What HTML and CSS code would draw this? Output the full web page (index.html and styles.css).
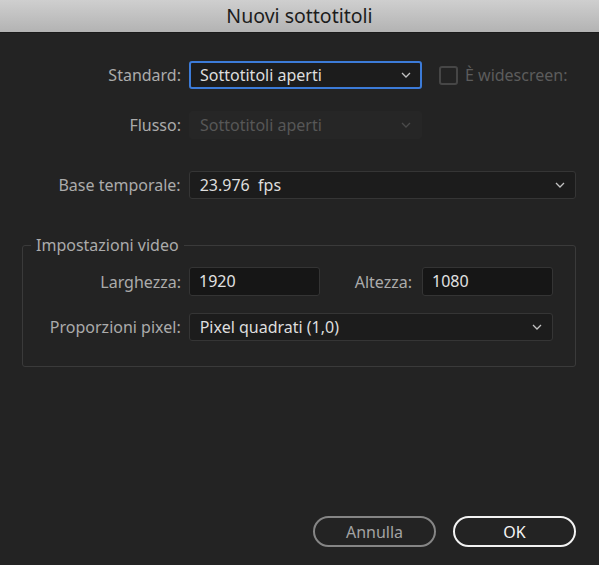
FILE: index.html
```html
<!DOCTYPE html>
<html lang="it">
<head>
<meta charset="utf-8">
<title>Nuovi sottotitoli</title>
<link rel="stylesheet" href="styles.css">
</head>
<body>
<div class="dialog">
  <div class="titlebar">Nuovi sottotitoli</div>
  <div class="content">
    <div class="row row-standard">
      <span class="label">Standard:</span>
      <div class="select focus w-std"><span class="value">Sottotitoli aperti</span><svg class="chev" viewBox="0 0 10 6" width="10" height="6"><path d="M1 1 L5 5 L9 1" fill="none" stroke="currentColor" stroke-width="1.3"/></svg></div>
      <div class="check disabled"><span class="box"></span><span class="check-label">È widescreen:</span></div>
    </div>
    <div class="row row-flusso">
      <span class="label">Flusso:</span>
      <div class="select disabled-select w-std"><span class="value">Sottotitoli aperti</span><svg class="chev" viewBox="0 0 10 6" width="10" height="6"><path d="M1 1 L5 5 L9 1" fill="none" stroke="currentColor" stroke-width="1.3"/></svg></div>
    </div>
    <div class="row row-base">
      <span class="label">Base temporale:</span>
      <div class="select w-full"><span class="value">23.976&nbsp; fps</span><svg class="chev" viewBox="0 0 10 6" width="10" height="6"><path d="M1 1 L5 5 L9 1" fill="none" stroke="currentColor" stroke-width="1.3"/></svg></div>
    </div>
    <fieldset class="group">
      <legend>Impostazioni video</legend>
      <div class="grow grow-size">
        <span class="glabel">Larghezza:</span>
        <div class="input">1920</div>
        <span class="alabel">Altezza:</span>
        <div class="input">1080</div>
      </div>
      <div class="grow grow-pixel">
        <span class="glabel">Proporzioni pixel:</span>
        <div class="select w-pixel"><span class="value">Pixel quadrati (1,0)</span><svg class="chev" viewBox="0 0 10 6" width="10" height="6"><path d="M1 1 L5 5 L9 1" fill="none" stroke="currentColor" stroke-width="1.3"/></svg></div>
      </div>
    </fieldset>
    <div class="buttons">
      <button class="btn cancel">Annulla</button>
      <button class="btn ok">OK</button>
    </div>
  </div>
</div>
</body>
</html>
```

FILE: styles.css
```css
* { box-sizing: border-box; }
html, body {
  margin: 0;
  padding: 0;
  background: #232323;
}
body {
  font-family: "Noto Sans", "Open Sans", sans-serif;
  font-size: 16px;
  color: #ababab;
}
.dialog {
  width: 599px;
  height: 565px;
  background: #232323;
  display: flex;
  flex-direction: column;
}
.titlebar {
  height: 33px;
  background: linear-gradient(#cfcfcf, #b3b3b3);
  border-bottom: 1px solid #1a1a1a;
  color: #1c1c1c;
  font-size: 19.5px;
  line-height: 32px;
  text-align: center;
}
.content {
  padding: 28px 23px 0 0;
  display: flex;
  flex-direction: column;
}
.row {
  display: flex;
  align-items: center;
  gap: 8px;
  line-height: 22px;
}
.label {
  width: 181px;
  text-align: right;
}
.row-flusso { margin-top: 22px; }
.row-base { margin-top: 32px; }
.select {
  height: 28px;
  border: 1px solid #353535;
  border-radius: 3px;
  background: #1c1c1c;
  display: flex;
  align-items: center;
  justify-content: space-between;
  padding: 0 10px 0 10px;
  color: #dedede;
}
.select .chev { color: #c2c2c2; flex: none; }
.select.focus {
  border: 2px solid #3c7bd8;
  padding-left: 9px;
  padding-right: 9px;
}
.disabled-select {
  border-color: #262626;
  background: #262626;
  color: #575757;
}
.disabled-select .chev { color: #4a4a4a; }
.w-std { width: 233px; }
.w-full { width: 388px; }
.w-pixel { width: 365px; }
.check {
  display: flex;
  align-items: center;
  gap: 7px;
  margin-left: 9px;
  color: #5c5c5c;
}
.check .box {
  width: 19px;
  height: 19px;
  border: 2px solid #464646;
  border-radius: 3px;
}
.group {
  margin: 35px 0 0 22px;
  padding: 11px 22px 25px 0;
  border: 1px solid #3a3a3a;
  border-radius: 3px;
  min-inline-size: 0;
  line-height: 22px;
}
.group legend {
  margin-left: 8px;
  padding: 0 5px;
  color: #ababab;
}
.grow {
  display: grid;
  grid-template-columns: 158px 131px 1fr 131px;
  align-items: center;
  gap: 8px;
}
.glabel {
  text-align: right;
}
.grow-pixel {
  margin-top: 17px;
  display: flex;
}
.grow-pixel .glabel { width: 158px; }
.input {
  height: 29px;
  background: #161616;
  border: 1px solid #343434;
  border-radius: 3px;
  color: #e2e2e2;
  padding-left: 9px;
  line-height: 27px;
}
.alabel {
  text-align: right;
  margin-right: 2px;
}
.buttons {
  margin-top: 149px;
  display: flex;
  justify-content: flex-end;
  gap: 17px;
}
.btn {
  width: 123px;
  height: 31px;
  border-radius: 16px;
  background: transparent;
  font-family: inherit;
  font-size: 16px;
  padding: 0;
}
.btn.cancel {
  border: 2px solid #858585;
  color: #a3a3a3;
}
.btn.ok {
  border: 2px solid #f2f2f2;
  color: #f5f5f5;
}
```
